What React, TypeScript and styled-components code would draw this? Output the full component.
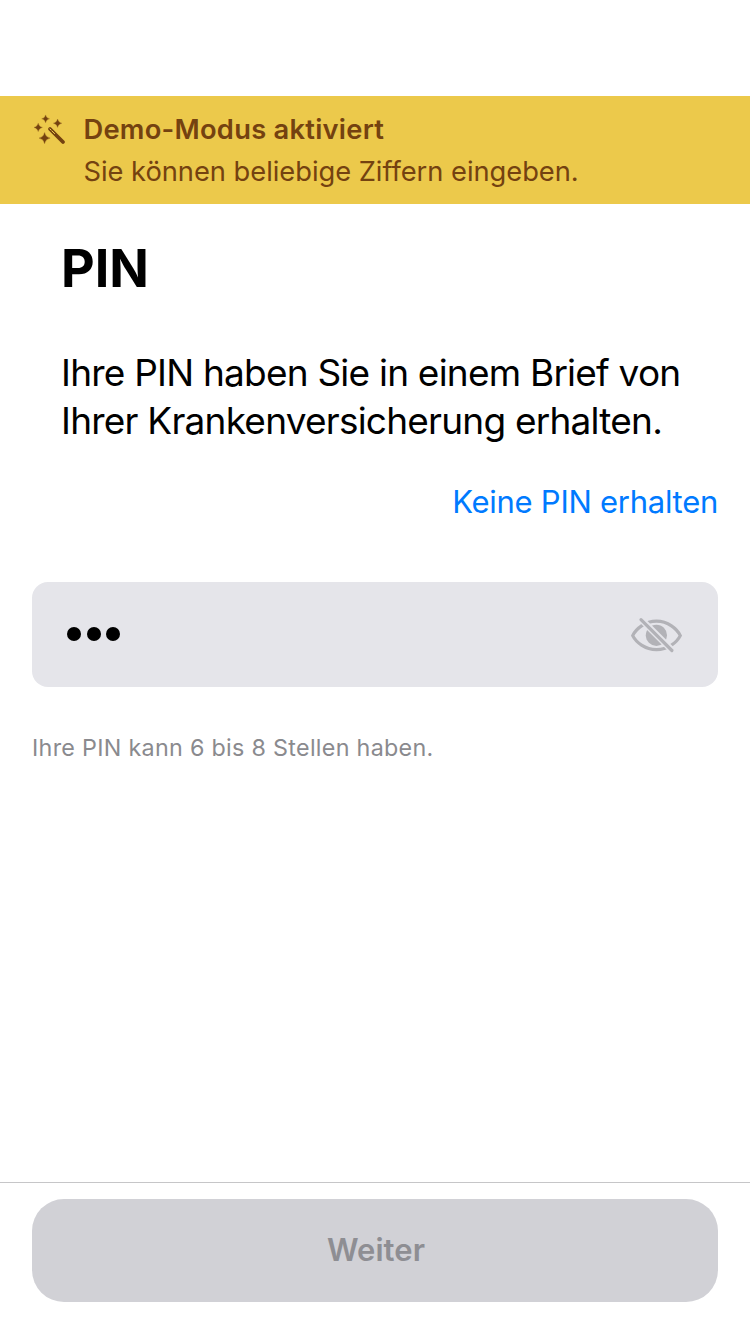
import React from "react";
import styled, { createGlobalStyle } from "styled-components";

const Global = createGlobalStyle`
  * { box-sizing: border-box; }
  body { margin: 0; background: #fff; font-family: Inter, "Liberation Sans", sans-serif; }
`;
const Screen = styled.main`
  height: 1334px; display: flex; flex-direction: column; padding-top: 96px; background: #fff; color: #000;
`;
const Banner = styled.section`
  height: 108px; background: #ecc94b; color: #744210; display: flex; gap: 15.5px; padding: 15px 32px 0;
`;
const WandIcon = styled.svg`
  width: 36px; height: 36px; flex: none;
`;
const EyeIcon = styled.svg`
  width: 52px; height: 36px; flex: none; color: #b2b2b7;
`;
const BannerText = styled.div``;
const Line = styled.span<{ $size: number; $weight?: number; $spacing?: number; $height: number }>`
  display: block; width: max-content; white-space: nowrap;
  font-size: ${p => p.$size}px; font-weight: ${p => p.$weight ?? 400};
  letter-spacing: ${p => p.$spacing ?? 0}px; line-height: ${p => p.$height}px;
`;
const Title = styled.h1`
  margin: 31px 0 0 61px;
`;
const Intro = styled.div`margin: 46px 0 0 61px;`;
const Link = styled.a`
  align-self: flex-end; margin: 37px 32px 0 0; color: #007aff;
`;
const Field = styled.div`
  margin: 60px 32px 0; height: 105px; flex: none; border-radius: 16px; background: #e5e5ea;
  display: flex; align-items: center; justify-content: space-between; padding: 0 35px;
`;
const Dots = styled.div`display: flex; gap: 5.5px; padding-bottom: 2px;`;
const Dot = styled.i`width: 14px; height: 14px; border-radius: 50%; background: #000;`;
const Hint = styled.div`margin: 45px 0 0 32px; color: #8a8a8e;`;
const Footer = styled.footer`
  margin-top: auto; height: 152px; border-top: 1px solid #c6c6c8; padding: 16px 32px 0;
`;
const Button = styled.button`
  width: 100%; height: 103px; border: 0; border-radius: 32px; background: #d1d1d6; color: #8e8e93;
  font-family: inherit; display: flex; align-items: center; justify-content: center; padding: 0 0 2px 2px;
`;

const Sparkle = ({ x, y, r }: { x: number; y: number; r: number }) => {
  const c = r * 0.16;
  return (
    <path
      d={`M${x} ${y - r}Q${x + c} ${y - c} ${x + r} ${y}Q${x + c} ${y + c} ${x} ${y + r}Q${x - c} ${y + c} ${x - r} ${y}Q${x - c} ${y - c} ${x} ${y - r}Z`}
      stroke="currentColor"
      strokeWidth="0.25"
    />
  );
};

export default function App() {
  return (
    <Screen>
      <Global />
      <Banner>
        <WandIcon viewBox="0 0 36 36" fill="currentColor" aria-hidden>
          <Sparkle x={13.6} y={7.8} r={3.9} />
          <Sparkle x={25.6} y={12.2} r={4.2} />
          <Sparkle x={6.2} y={16.4} r={4.2} />
          <Sparkle x={12.6} y={27.1} r={5.6} />
          <path d="M18 18L31 31" stroke="currentColor" strokeWidth="3.8" strokeLinecap="round" />
          <path d="M18 18L19.2 19.2M20.2 20.2L22.6 22.6" stroke="#ecc94b" strokeWidth="1" strokeLinecap="round" />
        </WandIcon>
        <BannerText>
          <Line $size={27.3} $weight={600} $spacing={0.26} $height={38}>Demo-Modus aktiviert</Line>
          <Line $size={27.3} $spacing={-0.03} $height={46}>Sie können beliebige Ziffern eingeben.</Line>
        </BannerText>
      </Banner>
      <Title><Line $size={52} $weight={700} $spacing={0} $height={68}>PIN</Line></Title>
      <Intro>
        <Line $size={37} $spacing={-0.78} $height={48}>Ihre PIN haben Sie in einem Brief von</Line>
        <Line $size={37} $spacing={-0.78} $height={48}>Ihrer Krankenversicherung erhalten.</Line>
      </Intro>
      <Link><Line $size={31} $spacing={-0.27} $height={40}>Keine PIN erhalten</Line></Link>
      <Field>
        <Dots><Dot /><Dot /><Dot /></Dots>
        <EyeIcon viewBox="0 0 52 36" fill="none" aria-hidden>
          <defs>
            <mask id="slash-gap">
              <rect width="52" height="36" fill="#fff" />
              <path d="M7.5 -0.3L46 38.2" stroke="#000" strokeWidth="6.6" />
            </mask>
          </defs>
          <g mask="url(#slash-gap)">
            <path d="M1.7 18.6C5 12 14 4.2 25.5 4.2C37 4.2 46 12 49.3 18.6C46 25.2 37 32.6 25.5 32.6C14 32.6 5 25.2 1.7 18.6Z" stroke="currentColor" strokeWidth="3.2" />
            <circle cx="25.4" cy="18.3" r="10.6" fill="currentColor" />
          </g>
          <path d="M10 2.6L40.9 33.5" stroke="currentColor" strokeWidth="3.2" strokeLinecap="round" />
        </EyeIcon>
      </Field>
      <Hint><Line $size={23.3} $spacing={0.3} $height={32}>Ihre PIN kann 6 bis 8 Stellen haben.</Line></Hint>
      <Footer><Button><Line $size={31} $weight={600} $spacing={0.05} $height={40}>Weiter</Line></Button></Footer>
    </Screen>
  );
}
